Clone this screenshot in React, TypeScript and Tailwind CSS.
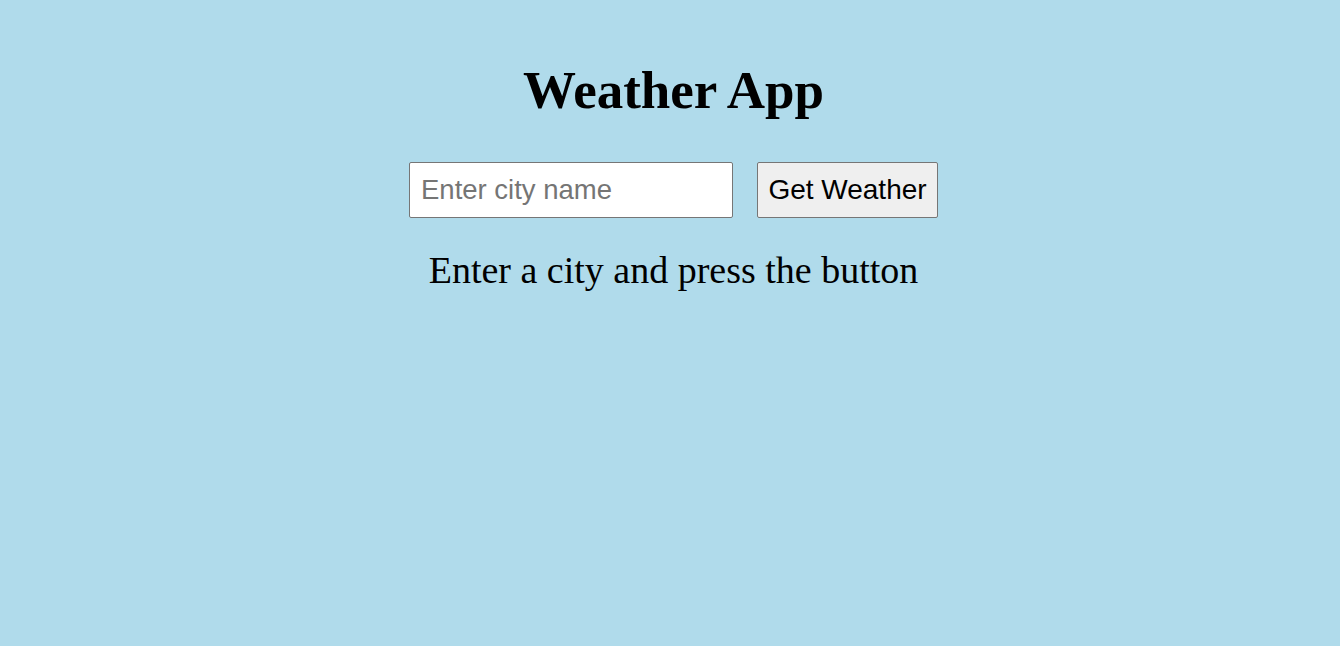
import { useState } from "react";

export default function App() {
  const [city, setCity] = useState("");

  return (
    <div className="min-h-screen w-full bg-[#b0dbeb] pl-[7px] text-center text-black font-['Liberation_Serif',serif]">
      <h1 className="pt-[60px] text-[53px] leading-[60px] font-bold">Weather App</h1>
      <div className="mt-[42px] flex justify-center gap-[24px]">
        <input
          value={city}
          onChange={(e) => setCity(e.target.value)}
          placeholder="Enter city name"
          className="h-[56px] w-[324px] rounded-[2px] border border-[#767676] bg-white px-[11px] text-[27.5px] font-['Liberation_Sans',Arial,sans-serif] text-black placeholder:text-[#757575] outline-none"
        />
        <button className="h-[56px] w-[181px] rounded-[2px] border border-[#767676] bg-[#efefef] text-[28px] font-['Liberation_Sans',Arial,sans-serif] text-black">
          Get Weather
        </button>
      </div>
      <p className="mt-[30px] text-[38px] leading-[44px]">Enter a city and press the button</p>
    </div>
  );
}
